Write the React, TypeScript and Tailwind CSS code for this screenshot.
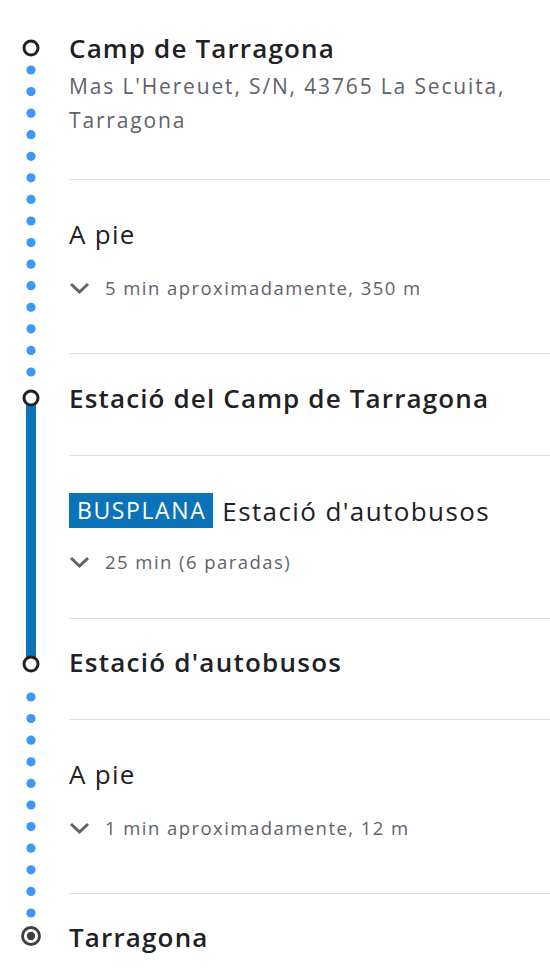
import React from "react";

const font = { fontFamily: "'Open Sans', Roboto, Arial, sans-serif" };

function Chevron() {
  return (
    <svg width="21" height="12" viewBox="0 0 21 12" className="shrink-0">
      <polyline points="2,2 10.5,10 19,2" fill="none" stroke="#5f6368" strokeWidth="3" />
    </svg>
  );
}

function Timeline() {
  const dots1 = Array.from({ length: 15 }, (_, i) => 70 + i * 21.57);
  const dots2 = Array.from({ length: 11 }, (_, i) => 697 + i * 21.6);
  return (
    <svg width="69" height="980" className="shrink-0 block">
      {dots1.map((y, i) => (
        <circle key={"a" + i} cx="31" cy={y} r="4.6" fill="#3d97f5" />
      ))}
      {dots2.map((y, i) => (
        <circle key={"b" + i} cx="31" cy={y} r="4.6" fill="#3d97f5" />
      ))}
      <rect x="26" y="404" width="10" height="254" fill="#0b74b9" />
      <circle cx="31" cy="48" r="7" fill="#fff" stroke="#202124" strokeWidth="3" />
      <circle cx="31" cy="398" r="7" fill="#fff" stroke="#202124" strokeWidth="3" />
      <circle cx="31" cy="664" r="7" fill="#fff" stroke="#202124" strokeWidth="3" />
      <circle cx="31" cy="936" r="8.5" fill="#fff" stroke="#3c4043" strokeWidth="2.8" />
      <circle cx="31" cy="936" r="4.2" fill="#3c4043" />
    </svg>
  );
}

function Detail({ text }: { text: string }) {
  return (
    <div className="flex items-center gap-[15px] text-[18.5px] leading-[24px] tracking-[1.45px] text-[#5f6368] whitespace-nowrap">
      <Chevron />
      <span>{text}</span>
    </div>
  );
}

export default function App() {
  return (
    <div className="flex w-[550px] h-[980px] bg-white overflow-hidden" style={font}>
      <Timeline />
      <div className="flex-1 flex flex-col min-w-0">
        <div className="h-[180px] border-b border-[#e3e3e3] pt-[32px]">
          <div className="text-[26px] leading-[32px] tracking-[1.15px] font-semibold text-[#202124]">Camp de Tarragona</div>
          <div className="mt-[5px] text-[21px] leading-[34px] tracking-[1.85px] text-[#5f6368] whitespace-nowrap">
            Mas L'Hereuet, S/N, 43765 La Secuita,
            <br />
            Tarragona
          </div>
        </div>
        <div className="h-[174px] border-b border-[#e3e3e3] pt-[38px]">
          <div className="text-[26px] leading-[32px] tracking-[1.3px] text-[#202124]">A pie</div>
          <div className="mt-[26px]">
            <Detail text="5 min aproximadamente, 350 m" />
          </div>
        </div>
        <div className="h-[102px] border-b border-[#e3e3e3] pt-[28px]">
          <div className="text-[26px] leading-[32px] tracking-[1.15px] font-semibold text-[#202124] whitespace-nowrap">Estació del Camp de Tarragona</div>
        </div>
        <div className="h-[163px] border-b border-[#e3e3e3] pt-[37px]">
          <div className="flex items-center gap-[9px] whitespace-nowrap">
            <span className="h-[35px] pl-[8px] pr-[7px] flex items-center bg-[#0b73b7] text-white text-[23px] leading-[35px] tracking-[1.6px]">BUSPLANA</span>
            <span className="text-[26px] leading-[32px] tracking-[1.4px] text-[#202124]">Estació d'autobusos</span>
          </div>
          <div className="mt-[22px]">
            <Detail text="25 min (6 paradas)" />
          </div>
        </div>
        <div className="h-[101px] border-b border-[#e3e3e3] pt-[27px]">
          <div className="text-[26px] leading-[32px] tracking-[1.25px] font-semibold text-[#202124]">Estació d'autobusos</div>
        </div>
        <div className="h-[174px] border-b border-[#e3e3e3] pt-[38px]">
          <div className="text-[26px] leading-[32px] tracking-[1.3px] text-[#202124]">A pie</div>
          <div className="mt-[26px]">
            <Detail text="1 min aproximadamente, 12 m" />
          </div>
        </div>
        <div className="pt-[27px]">
          <div className="text-[26px] leading-[32px] tracking-[1.15px] font-semibold text-[#202124]">Tarragona</div>
        </div>
      </div>
    </div>
  );
}
